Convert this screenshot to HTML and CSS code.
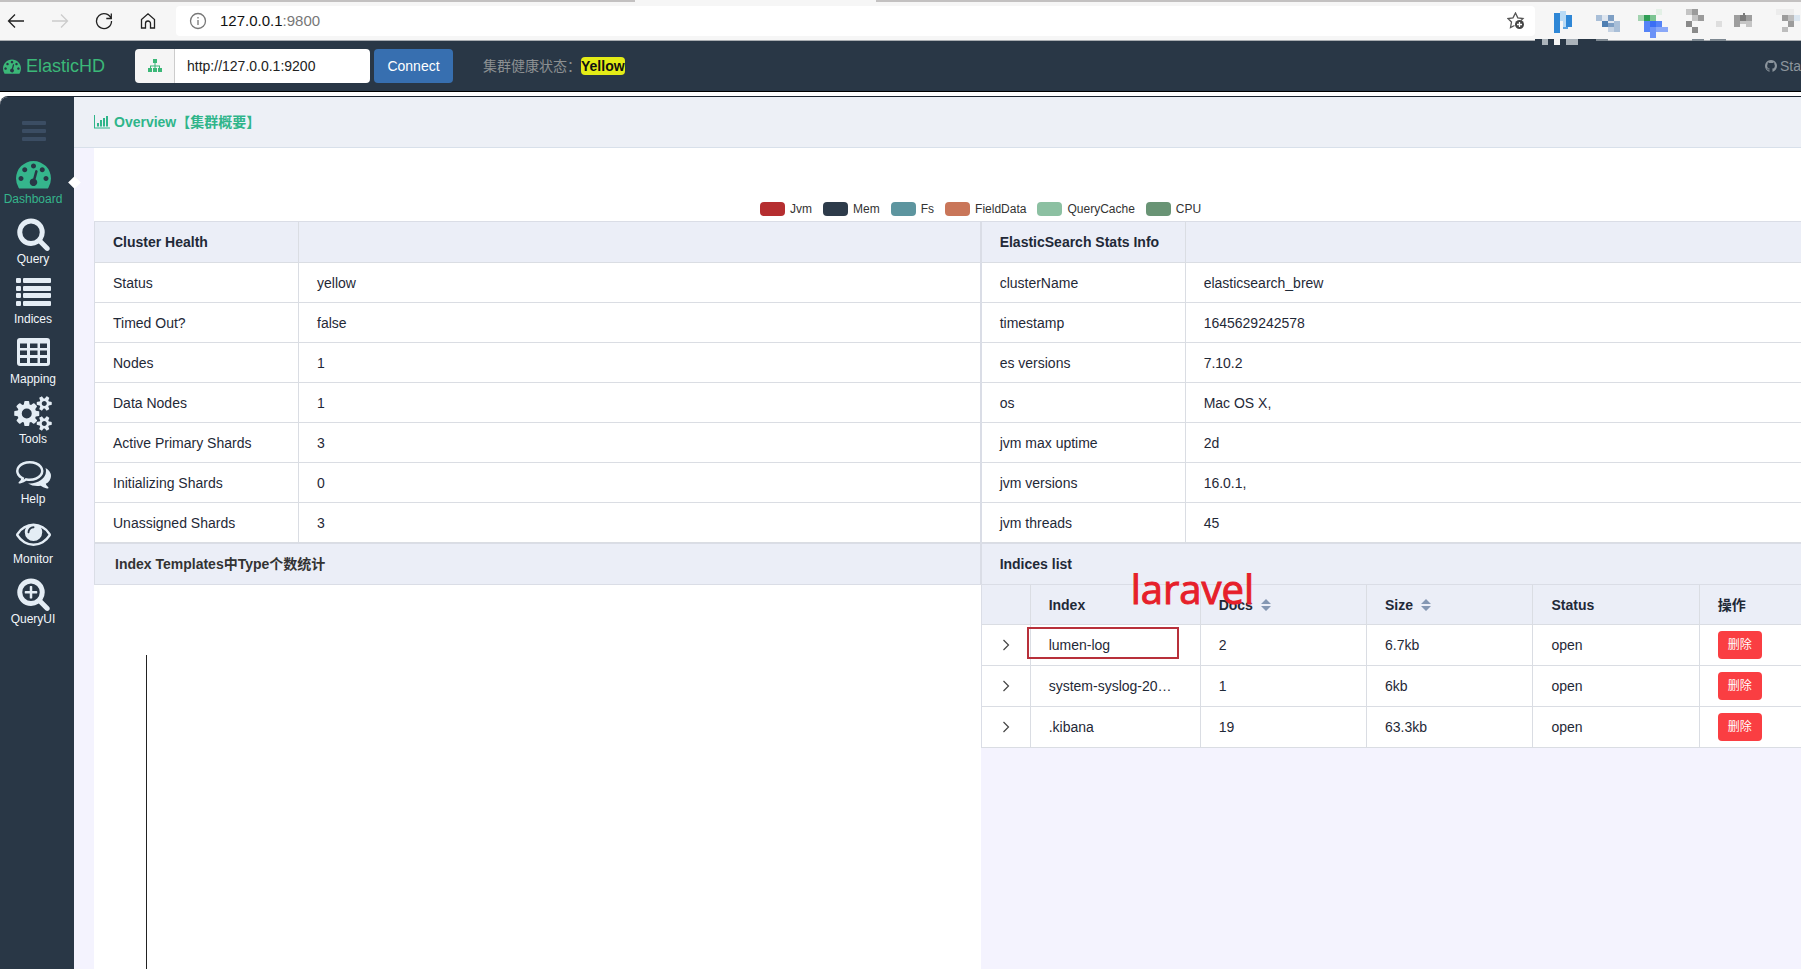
FILE: index.html
```html
<!DOCTYPE html>
<html lang="zh-CN">
<head>
<meta charset="utf-8">
<title>ElasticHD</title>
<link rel="stylesheet" href="styles.css">
</head>
<body>
<div class="browser">
  <div class="tabstrip"><div class="tab"></div></div>
  <div class="toolbar">
    <button class="tool" aria-label="Back"><svg width="18" height="16" viewBox="0 0 18 16"><path d="M17 8H2M8 1.500L1.500 8 8 14.500" stroke="#222"/></svg></button>
    <button class="tool" aria-label="Forward" disabled><svg width="18" height="16" viewBox="0 0 18 16"><path d="M1 8h15M10 1.500L16.500 8 10 14.500" stroke="#ccc"/></svg></button>
    <button class="tool" aria-label="Reload"><svg width="18" height="18" viewBox="0 0 18 18"><path d="M16.200 7A7.500 7.500 0 1 0 16.500 9M16.300 1.500V6.500H11.300" stroke="#222"/></svg></button>
    <button class="tool" aria-label="Home"><svg width="16" height="18" viewBox="0 0 16 18"><path d="M1.500 7.500L8 1.800l6.500 5.700V16h-4v-4.500a2.500 2.500 0 0 0-5 0V16h-4z" stroke="#222"/></svg></button>
    <div class="address">
      <svg width="18" height="18" viewBox="0 0 18 18"><circle cx="9" cy="9" r="7.500" stroke="#777"/><path d="M9 8v5M9 5v1.500" stroke="#777"/></svg>
      <span class="url">127.0.0.1<span class="port">:9800</span></span>
      <button class="fav" aria-label="Add to favourites"><svg width="18" height="18" viewBox="0 0 18 18"><path d="M7.500 13.500L3.500 15.500l1-5.500L1 6.500l5-.7L8.500 1l2.300 4.800 5.200.7-2 2" stroke="#555"/><circle cx="12.500" cy="12.500" r="4.500" fill="#444"/><path d="M12.500 10v5M10 12.500h5" stroke="#fff"/></svg></button>
    </div>
    <svg class="extensions" width="266" height="47" viewBox="165 0 798 141" shape-rendering="crispEdges">
      <path fill="#2f87d6" d="M222 40h18v58h-18zM258 45h18v35h-18z"/><path fill="#9fcbf0" d="M240 32h18v30h-18z"/><path fill="#5aa3e0" d="M240 62h18v-14h-18zM250 80h14v6h-14z"/><path fill="#b8daf5" d="M240 32h18v30h-18zM248 62h10v18h-10z"/>
      <path fill="#a9bfd8" d="M348 45h18v18h-18zM402 63h18v18h-18zM402 81h18v16h-18z"/><path fill="#4f7fb2" d="M366 63h18v18h-18z"/><path fill="#7e9fc4" d="M384 45h18v18h-18zM384 63h18v18h-18z"/><path fill="#dfe6ef" d="M366 45h18v18h-18zM384 63h18v5h-18z"/><path fill="#c6d3e3" d="M384 81h18v16h-18z"/>
      <path fill="#a3d3b0" d="M475 45h17v18h-17z"/><path fill="#7cc492" d="M510 45h18v18h-18z"/><path fill="#2f9e55" d="M492 45h18v18h-18z"/><path fill="#e3f0e6" d="M528 27h18v18h-18z"/><path fill="#3b6ef5" d="M510 63h18v18h-18z"/><path fill="#5583f7" d="M492 63h18v34h-18zM528 63h18v18h-18z"/><path fill="#6b92f7" d="M510 81h18v34h-18z"/><path fill="#8aa8f8" d="M528 81h36v16h-36z"/>
      <path fill="#c4c4c4" d="M618 27h18v18h-18zM636 45h18v18h-18z"/><path fill="#dedede" d="M708 63h18v18h-18z"/><path fill="#9b9b9b" d="M636 27h18v18h-18zM654 45h18v18h-18z"/><path fill="#8a8a8a" d="M618 63h18v18h-18zM636 81h18v18h-18z"/>
      <path fill="#9e9e9e" d="M762 45h18v36h-18zM798 45h18v18h-18z"/><path fill="#7c7c7c" d="M780 45h18v18h-18zM788 38h8v8h-8z"/><path fill="#c5c5c5" d="M780 63h18v9h-18zM798 63h18v18h-18z"/>
      <path fill="#ececec" d="M889 27h54v18h-54z"/><path fill="#9c9c9c" d="M906 45h18v18h-18zM924 63h18v18h-18z"/><path fill="#bdbdbd" d="M924 45h18v18h-18zM906 81h18v14h-18z"/><path fill="#dbe6f0" d="M942 45h18v18h-18z"/>
      <path fill="#293746" d="M165 117h183v7H165z"/><path fill="#abb3ba" d="M186 117h18v18h-18zM258 117h36v17h-36z"/><path fill="#f4f4f4" d="M222 117h18v18h-18z"/><path fill="#7d8891" d="M348 117h36v7h-36zM636 117h36v7h-36zM690 117h48v7h-48z"/>
    </svg>
  </div>
</div>

<svg class="sprite" aria-hidden="true">
  <symbol id="tach" viewBox="0 0 1792 1792"><path d="M384 1152q0-53-37.500-90.500t-90.500-37.500-90.500 37.500-37.500 90.500 37.500 90.500 90.500 37.500 90.500-37.500 37.500-90.500zm192-448q0-53-37.500-90.500t-90.500-37.500-90.500 37.500-37.500 90.500 37.500 90.500 90.500 37.500 90.500-37.500 37.500-90.500zm428 481l101-382q6-26-7.500-48.500t-38.500-29.500-48 6.500-30 39.500l-101 382q-60 5-107 43.500t-63 98.500q-20 77 20 146t117 89 146-20 89-117q16-60-6-117t-72-91zm660-33q0-53-37.500-90.500t-90.500-37.500-90.500 37.500-37.500 90.500 37.500 90.500 90.500 37.500 90.500-37.500 37.500-90.500zm-640-640q0-53-37.500-90.500t-90.500-37.500-90.500 37.500-37.500 90.500 37.500 90.500 90.500 37.500 90.500-37.500 37.500-90.500zm448 192q0-53-37.500-90.500t-90.500-37.500-90.500 37.500-37.500 90.500 37.500 90.500 90.500 37.500 90.500-37.500 37.500-90.500zm320 448q0 261-141 483-19 29-54 29h-1402q-35 0-54-29-141-221-141-483 0-182 71-348t191-286 286-191 348-71 348 71 286 191 191 286 71 348z"/></symbol>
</svg>

<header class="navbar">
  <a class="brand" href="#"><svg width="18" height="18"><use href="#tach"/></svg>ElasticHD</a>
  <form class="connect">
    <label class="addon" for="host" aria-label="Host"><svg width="14" height="14" viewBox="0 0 14 14"><path d="M5 0h4v4H7.500v2.500H12V9h2v4h-4V9h1V7.500H7.500V9H9v4H5V9h1.500V7.500H3V9h1v4H0V9h2V6.500h4.500V4H5z"/></svg></label>
    <input class="host" id="host" type="text" value="http://127.0.0.1:9200">
    <button class="go" type="button">Connect</button>
  </form>
  <div class="health">集群健康状态：<strong class="state">Yellow</strong></div>
  <a class="github" href="#"><svg width="12" height="12" viewBox="128 128 1536 1536"><path d="M896 128q209 0 385.500 103t279.500 279.500 103 385.500q0 251-146.500 451.500t-378.500 277.500q-27 5-40-7t-13-30q0-3 .5-76.500t.5-134.500q0-97-52-142 57-6 102.500-18t94-39 81-66.500 53-105 20.500-150.500q0-119-79-206 37-91-8-204-28-9-81 11t-92 44l-38 24q-93-26-192-26t-192 26q-16-11-42.500-27t-83.500-38.500-85-13.500q-45 113-8 204-79 87-79 206 0 85 20.500 150t52.500 105 80.500 67 94 39 102.500 18q-39 36-49 103-21 10-45 15t-57 5-65.500-21.500-55.500-62.500q-19-32-48.500-52t-49.500-24l-20-3q-21 0-29 4.500t-5 11.500 9 14 13 12l7 5q22 10 43.500 38t31.500 51l10 23q13 38 44 61.500t67 30 69.500 7 55.500-3.500l23-4q0 38 .5 88.500t.5 54.500q0 18-13 30t-40 7q-232-77-378.500-277.500t-146.500-451.500q0-209 103-385.500t279.500-279.500 385.500-103z"/></svg>Sta</a>
</header>

<div class="app">
  <nav class="sidebar">
    <button class="burger" aria-label="Menu"><span></span><span></span><span></span></button>
    <a class="item active" href="#"><svg width="35" height="35"><use href="#tach"/></svg>Dashboard</a>
    <a class="item" href="#"><svg width="35" height="35" viewBox="0 0 1792 1792"><path d="M1216 832q0-185-131.500-316.500t-316.500-131.500-316.500 131.500-131.500 316.500 131.500 316.500 316.500 131.500 316.500-131.500 131.500-316.500zm512 832q0 52-38 90t-90 38q-54 0-90-38l-343-342q-179 124-399 124-143 0-273.500-55.500t-225-150-150-225-55.500-273.500 55.500-273.500 150-225 225-150 273.500-55.500 273.500 55.500 225 150 150 225 55.500 273.500q0 220-124 399l343 343q37 37 37 90z"/></svg>Query</a>
    <a class="item" href="#"><svg width="35" height="35" viewBox="0 0 35 35"><g><rect y="2" width="5" height="5" rx="1"/><rect x="7" y="2" width="28" height="5" rx="1"/><rect y="10" width="5" height="5" rx="1"/><rect x="7" y="10" width="28" height="5" rx="1"/><rect y="17" width="5" height="5" rx="1"/><rect x="7" y="17" width="28" height="5" rx="1"/><rect y="25" width="5" height="5" rx="1"/><rect x="7" y="25" width="28" height="5" rx="1"/></g></svg>Indices</a>
    <a class="item" href="#"><svg width="35" height="35" viewBox="0 0 35 35"><path fill-rule="evenodd" d="M4 2h27a3 3 0 0 1 3 3v22a3 3 0 0 1-3 3H4a3 3 0 0 1-3-3V5a3 3 0 0 1 3-3zM4 7.500V12h7V7.500zM14 7.500V12h7.500V7.500zM24 7.500V12h7V7.500zM4 14.500V19h7v-4.500zM14 14.500V19h7.500v-4.500zM24 14.500V19h7v-4.500zM4 22v5h7v-5zM14 22v5h7.500v-5zM24 22v5h7v-5z"/></svg>Mapping</a>
    <a class="item" href="#"><svg width="38" height="35" viewBox="0 0 1920 1792"><path d="M896 896q0-106-75-181t-181-75-181 75-75 181 75 181 181 75 181-75 75-181zm768 512q0-52-38-90t-90-38-90 38-38 90q0 53 37.500 90.500t90.500 37.500 90.500-37.500 37.500-90.500zm0-1024q0-52-38-90t-90-38-90 38-38 90q0 53 37.500 90.500t90.500 37.500 90.500-37.500 37.500-90.500zm-384 421v185q0 10-7 19.500t-16 10.500l-155 24q-11 35-32 76 34 48 90 115 7 11 7 20 0 12-7 19-23 30-82.500 89.500t-78.500 59.500q-11 0-21-7l-115-90q-37 19-77 31-11 108-23 155-7 24-30 24h-186q-11 0-20-7.500t-10-17.500l-23-153q-34-10-75-31l-118 89q-7 7-20 7-11 0-21-8-144-133-144-160 0-9 7-19 10-14 41-53t47-61q-23-44-35-82l-152-24q-10-1-17-9.500t-7-19.500v-185q0-10 7-19.500t16-10.500l155-24q11-35 32-76-34-48-90-115-7-11-7-20 0-12 7-20 22-30 82-89t79-59q11 0 21 7l115 90q34-18 77-32 11-108 23-154 7-24 30-24h186q11 0 20 7.500t10 17.500l23 153q34 10 75 31l118-89q8-7 20-7 11 0 21 8 144 133 144 160 0 8-7 19-12 16-42 54t-45 60q23 48 34 82l152 23q10 2 17 10.500t7 19.500zm640 533v140q0 16-149 31-12 27-30 52 51 113 51 138 0 4-4 7-122 71-124 71-8 0-46-47t-52-68q-20 2-30 2t-30-2q-14 21-52 68t-46 47q-2 0-124-71-4-3-4-7 0-25 51-138-18-25-30-52-149-15-149-31v-140q0-16 149-31 13-29 30-52-51-113-51-138 0-4 4-7 4-2 35-20t59-34 30-16q8 0 46 46.500t52 67.500q20-2 30-2t30 2q51-71 92-112l6-2q4 0 124 70 4 3 4 7 0 25-51 138 17 23 30 52 149 15 149 31zm0-1024v140q0 16-149 31-12 27-30 52 51 113 51 138 0 4-4 7-122 71-124 71-8 0-46-47t-52-68q-20 2-30 2t-30-2q-14 21-52 68t-46 47q-2 0-124-71-4-3-4-7 0-25 51-138-18-25-30-52-149-15-149-31v-140q0-16 149-31 13-29 30-52-51-113-51-138 0-4 4-7 4-2 35-20t59-34 30-16q8 0 46 46.500t52 67.500q20-2 30-2t30 2q51-71 92-112l6-2q4 0 124 70 4 3 4 7 0 25-51 138 17 23 30 52 149 15 149 31z"/></svg>Tools</a>
    <a class="item" href="#"><svg width="35" height="35" viewBox="0 0 1792 1792"><path d="M704 384q-153 0-286 52t-211.500 141-78.500 191q0 82 53 158t149 132l97 56-35 84q34-20 62-39l44-31 53 10q78 14 153 14 153 0 286-52t211.500-141 78.500-191-78.500-191-211.500-141-286-52zm0-128q191 0 353.500 68.500t256.500 186.500 94 257-94 257-256.500 186.500-353.500 68.500q-86 0-176-16-124 88-278 128-36 9-86 16h-3q-11 0-20.500-8t-11.500-21q-1-3-1-6.500t.5-6.500 2-6l2.500-5 3.500-5.500 4-5 4.500-5 4-4.500q5-6 23-25t26-29.500 22.500-29 25-38.500 20.500-44q-124-72-195-177t-71-224q0-139 94-257t256.500-186.500 353.500-68.500zm822 1169q10 24 20.500 44t25 38.500 22.500 29 26 29.500 23 25q1 1 4 4.500t4.500 5 4 5 3.500 5.500l2.500 5 2 6 .5 6.500-1 6.500q-3 14-13 22t-22 7q-50-7-86-16-154-40-278-128-90 16-176 16-271 0-472-132 58 4 88 4 161 0 309-45t264-129q125-92 192-212t67-254q0-77-23-152 129 71 204 178t75 230q0 120-71 224.500t-195 176.500z"/></svg>Help</a>
    <a class="item" href="#"><svg width="35" height="35" viewBox="0 0 1792 1792"><path d="M1664 960q-152-236-381-353 61 104 61 225 0 185-131.500 316.500t-316.500 131.500-316.500-131.500-131.500-316.500q0-121 61-225-229 117-381 353 133 205 333.500 326.500t434.500 121.500 434.500-121.500 333.500-326.500zm-720-384q0-20-14-34t-34-14q-125 0-214.500 89.500t-89.500 214.500q0 20 14 34t34 14 34-14 14-34q0-86 61-147t147-61q20 0 34-14t14-34zm848 384q0 34-20 69-140 230-376.500 368.500t-499.500 138.500-499.500-139-376.500-368q-20-35-20-69t20-69q140-229 376.500-368t499.500-139 499.500 139 376.500 368q20 35 20 69z"/></svg>Monitor</a>
    <a class="item" href="#"><svg width="35" height="35" viewBox="0 0 1792 1792"><path d="M1088 800v64q0 13-9.500 22.500t-22.500 9.500h-224v224q0 13-9.500 22.500t-22.500 9.500h-64q-13 0-22.500-9.500t-9.500-22.500v-224h-224q-13 0-22.500-9.500t-9.500-22.500v-64q0-13 9.500-22.500t22.500-9.500h224v-224q0-13 9.500-22.500t22.500-9.500h64q13 0 22.500 9.500t9.500 22.500v224h224q13 0 22.500 9.500t9.500 22.500zm128 32q0-185-131.500-316.500t-316.500-131.500-316.500 131.500-131.500 316.500 131.500 316.500 316.500 131.500 316.500-131.500 131.500-316.500zm512 832q0 52-38 90t-90 38q-54 0-90-38l-343-342q-179 124-399 124-143 0-273.500-55.500t-225-150-150-225-55.500-273.500 55.500-273.500 150-225 225-150 273.500-55.500 273.500 55.500 225 150 150 225 55.500 273.500q0 220-124 399l343 343q37 37 37 90z"/></svg>QueryUI</a>
  </nav>

  <main class="main">
    <h1 class="title"><svg width="16" height="14" viewBox="0 0 16 14"><path d="M0 0h1v12.500h15v1H0zM3 8h2v3.500H3zM6 5h2v6.500H6zM9 3h2v8.500H9zM12 1h2v10.500h-2z"/></svg>Overview【集群概要】</h1>
    <div class="content">
      <div class="canvas">
        <ul class="legend">
          <li><i class="swatch jvm"></i>Jvm</li>
          <li><i class="swatch mem"></i>Mem</li>
          <li><i class="swatch fs"></i>Fs</li>
          <li><i class="swatch field"></i>FieldData</li>
          <li><i class="swatch cache"></i>QueryCache</li>
          <li><i class="swatch cpu"></i>CPU</li>
        </ul>
        <div class="columns">
          <section class="column">
            <table class="grid">
              <thead><tr><th class="key">Cluster Health</th><th></th></tr></thead>
              <tbody>
                <tr><td>Status</td><td>yellow</td></tr>
                <tr><td>Timed Out?</td><td>false</td></tr>
                <tr><td>Nodes</td><td>1</td></tr>
                <tr><td>Data Nodes</td><td>1</td></tr>
                <tr><td>Active Primary Shards</td><td>3</td></tr>
                <tr><td>Initializing Shards</td><td>0</td></tr>
                <tr><td>Unassigned Shards</td><td>3</td></tr>
              </tbody>
            </table>
            <h2 class="bar templates">Index Templates中Type个数统计</h2>
            <div class="chart"><div class="axis"></div></div>
          </section>
          <section class="column">
            <table class="grid">
              <thead><tr><th class="key">ElasticSearch Stats Info</th><th></th></tr></thead>
              <tbody>
                <tr><td>clusterName</td><td>elasticsearch_brew</td></tr>
                <tr><td>timestamp</td><td>1645629242578</td></tr>
                <tr><td>es versions</td><td>7.10.2</td></tr>
                <tr><td>os</td><td>Mac OS X,</td></tr>
                <tr><td>jvm max uptime</td><td>2d</td></tr>
                <tr><td>jvm versions</td><td>16.0.1,</td></tr>
                <tr><td>jvm threads</td><td>45</td></tr>
              </tbody>
            </table>
            <h2 class="bar">Indices list</h2>
            <div class="indices">
              <table class="grid list">
                <thead><tr>
                  <th class="expand"></th><th class="name">Index</th>
                  <th>Docs<svg class="sort" width="10" height="14" viewBox="0 0 10 14"><path d="M5 1l5 5H0zM0 8h10l-5 5z"/></svg></th>
                  <th>Size<svg class="sort" width="10" height="14" viewBox="0 0 10 14"><path d="M5 1l5 5H0zM0 8h10l-5 5z"/></svg></th>
                  <th>Status</th><th>操作</th>
                </tr></thead>
                <tbody>
                  <tr><td class="expand"><button class="chevron" aria-label="Expand"><svg width="8" height="12" viewBox="0 0 8 12"><path d="M1.500 1l5 5-5 5"/></svg></button></td><td>lumen-log</td><td>2</td><td>6.7kb</td><td>open</td><td><button class="delete">删除</button></td></tr>
                  <tr><td class="expand"><button class="chevron" aria-label="Expand"><svg width="8" height="12" viewBox="0 0 8 12"><path d="M1.500 1l5 5-5 5"/></svg></button></td><td>system-syslog-20…</td><td>1</td><td>6kb</td><td>open</td><td><button class="delete">删除</button></td></tr>
                  <tr><td class="expand"><button class="chevron" aria-label="Expand"><svg width="8" height="12" viewBox="0 0 8 12"><path d="M1.500 1l5 5-5 5"/></svg></button></td><td>.kibana</td><td>19</td><td>63.3kb</td><td>open</td><td><button class="delete">删除</button></td></tr>
                </tbody>
              </table>
              <div class="mark-box"></div>
              <div class="mark-text">laravel</div>
            </div>
          </section>
        </div>
      </div>
    </div>
  </main>
</div>
</body>
</html>
```
FILE: styles.css
```css
* { box-sizing: border-box; }
body {
  margin: 0;
  min-height: 100vh;
  display: flex;
  flex-direction: column;
  overflow: hidden;
  background: #fff;
  color: #1f2937;
  font: 14px/20px "Liberation Sans", "Noto Sans CJK SC", sans-serif;
}
button { border: 0; padding: 0; background: none; font: inherit; }
a { text-decoration: none; }
svg { display: block; flex: none; }
.sprite { position: absolute; width: 0; height: 0; }

/* browser chrome */
.browser { background: #f6f6f6; border-bottom: 1px solid #a9adb2; }
.tabstrip { height: 2px; background: #c3c1c1; padding-left: 635px; }
.tab { width: 241px; height: 2px; background: #f6f6f6; }
.toolbar { display: flex; align-items: center; height: 38px; padding-left: 7px; position: relative; }
.tool { width: 18px; margin-right: 26px; display: flex; justify-content: center; }
.toolbar path, .toolbar circle { stroke-width: 1.3; }
.tool svg, .address svg { fill: none; }
.address {
  flex: 1;
  display: flex;
  align-items: center;
  height: 30px;
  margin-right: 266px;
  margin-left: -7px;
  padding: 0 10px 0 13px;
  background: #fff;
  border-radius: 4px;
}
.url { margin-left: 13px; font-size: 15px; color: #111; }
.port { color: #777; }
.fav { margin-left: auto; }
.extensions { position: absolute; right: 0; top: -2px; z-index: 1; }

/* top navigation */
.navbar {
  display: flex;
  align-items: center;
  height: 51px;
  padding: 0 0 0 3px;
  background: #293746;
  border-bottom: 1px solid #000;
}
.brand { display: flex; align-items: center; gap: 5px; width: 132px; font-size: 18px; color: #3bb878; }
.brand svg, .addon svg { fill: #3bb878; }
.connect { display: flex; height: 34px; }
.addon {
  display: flex;
  align-items: center;
  justify-content: center;
  width: 40px;
  background: #f5f5f5;
  border-right: 1px solid #ccc;
  border-radius: 4px 0 0 4px;
}
.host {
  width: 195px;
  padding: 0 12px;
  border: 0;
  border-radius: 0 4px 4px 0;
  background: #fff;
  color: #222;
  font: inherit;
}
.go { width: 79px; margin-left: 4px; border-radius: 4px; background: #376fb0; color: #fff; }
.health { margin-left: 30px; color: #8c9092; }
.state { padding: 1px 0; border-radius: 4px; background: #e4ec17; color: #111; }
.github { display: flex; align-items: center; gap: 3px; margin-left: auto; color: #8c959d; font-size: 14px; }
.github svg { fill: #8c959d; }

/* shell */
.app { flex: 1; display: flex; margin-top: 4px; border-top: 1px solid #1b2430; border-top-left-radius: 8px; background: #f4f3fe; }
.sidebar {
  width: 74px;
  display: flex;
  flex-direction: column;
  align-items: center;
  gap: 9px;
  padding-top: 24px;
  padding-right: 8px;
  background: #293746;
  border-top-left-radius: 8px;
}
.burger { display: flex; flex-direction: column; gap: 4px; width: 24px; margin-bottom: 6px; margin-left: 2px; }
.burger span { height: 4px; border-radius: 1px; background: #3b4d63; }
.item {
  position: relative;
  display: flex;
  flex-direction: column;
  align-items: center;
  width: 66px;
  color: #f2f6fa;
  font-size: 12px;
  line-height: 16px;
}
.item svg { fill: #e4edf5; }
.active { color: #35b58c; }
.active svg { fill: #35b58c; }
.active::after {
  content: "";
  position: absolute;
  top: 22px;
  left: 70px;
  width: 9px;
  height: 9px;
  background: #fff;
  transform: rotate(45deg);
}
.main { flex: 1; min-width: 0; display: flex; flex-direction: column; }
.title {
  display: flex;
  align-items: center;
  gap: 4px;
  height: 51px;
  margin: 0;
  padding-left: 20px;
  background: #edf0f6;
  border-bottom: 1px solid #d8e0ea;
  color: #2fb58a;
  font-size: 14px;
}
.title svg { fill: #2fb58a; }
.content { flex: 1; display: flex; padding-left: 20px; }

/* the dashboard is slightly wider than its viewport */
.canvas { flex: none; width: calc(104% - 2px); display: flex; flex-direction: column; }
.legend {
  display: flex;
  justify-content: center;
  align-items: flex-end;
  gap: 11px;
  height: 73px;
  margin: 0;
  padding: 0 0 4px;
  background: #fff;
  list-style: none;
  color: #333;
  font-size: 12px;
  line-height: 16px;
}
.legend li { display: flex; align-items: center; gap: 5px; }
.swatch { width: 25px; height: 14px; border-radius: 4px; }
.jvm { background: #b52e30; }
.mem { background: #2d3b4a; }
.fs { background: #5d959f; }
.field { background: #c97659; }
.cache { background: #8cc0a2; }
.cpu { background: #699475; }

.columns { flex: 1; display: grid; grid-template-columns: 1fr 1fr; }
.column { display: flex; flex-direction: column; min-width: 0; }
.grid {
  width: 100%;
  table-layout: fixed;
  border-collapse: separate;
  border-spacing: 0;
  border: 1px solid #dadde6;
  border-bottom: 0;
  background: #fff;
}
.grid th, .grid td {
  height: 40px;
  padding: 0 18px;
  border-right: 1px solid #dadde3;
  border-bottom: 1px solid #dadde3;
  text-align: left;
  white-space: nowrap;
}
.grid th { height: 41px; background: #ebeef7; }
.grid tr > :last-child { border-right: 0; }
.grid .key { width: 204px; }
.bar {
  height: 42px;
  margin: 0;
  padding: 0 18px;
  border: 1px solid #dadde6;
  background: #ebeef7;
  font-size: 14px;
  line-height: 40px;
}
.templates { padding-left: 20px; color: #333; }
.chart { flex: 1; display: flex; padding: 70px 0 0 52px; background: #fff; }
.axis { width: 1px; background: #222; }

.indices { position: relative; }
.grid.list { border-top: 0; }
.list th { height: 40px; }
.list td { height: 41px; }
.list .expand { width: 49px; padding: 0; }
.list .name { width: 170px; }
.sort { display: inline-block; margin-left: 8px; vertical-align: -2px; fill: #8497b3; }
.chevron { display: flex; justify-content: center; width: 48px; }
.chevron path { fill: none; stroke: #444; stroke-width: 1.2; }
.delete { display: block; width: 44px; height: 28px; border-radius: 4px; background: #fa3e42; color: #fff; font-size: 12px; }
.grid.list th { height: 40px; }
.grid.list td { height: 41px; }
.mark-box { position: absolute; left: 46px; top: 42px; width: 152px; height: 32px; border: 2px solid #b8303a; }
.mark-text {
  position: absolute;
  left: 150px;
  top: -20px;
  color: #e6202a;
  font: 40px/48px "Open Sans", sans-serif;
  -webkit-text-stroke: 1px #e6202a;
}
```
